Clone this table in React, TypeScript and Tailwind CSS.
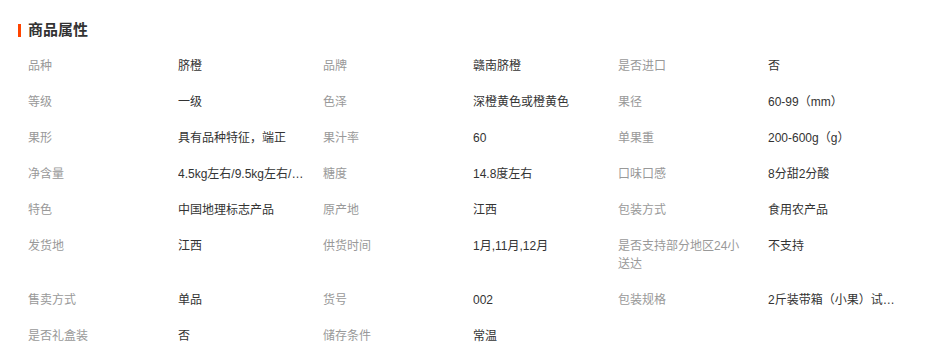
// Product attributes panel (商品属性)
type Attr = { label: string; value: string };

const rows: Attr[][] = [
  [
    { label: '品种', value: '脐橙' },
    { label: '品牌', value: '赣南脐橙' },
    { label: '是否进口', value: '否' },
  ],
  [
    { label: '等级', value: '一级' },
    { label: '色泽', value: '深橙黄色或橙黄色' },
    { label: '果径', value: '60-99（mm）' },
  ],
  [
    { label: '果形', value: '具有品种特征，端正' },
    { label: '果汁率', value: '60' },
    { label: '单果重', value: '200-600g（g）' },
  ],
  [
    { label: '净含量', value: '4.5kg左右/9.5kg左右/2.5kg左右' },
    { label: '糖度', value: '14.8度左右' },
    { label: '口味口感', value: '8分甜2分酸' },
  ],
  [
    { label: '特色', value: '中国地理标志产品' },
    { label: '原产地', value: '江西' },
    { label: '包装方式', value: '食用农产品' },
  ],
  [
    { label: '发货地', value: '江西' },
    { label: '供货时间', value: '1月,11月,12月' },
    { label: '是否支持部分地区24小送达', value: '不支持' },
  ],
  [
    { label: '售卖方式', value: '单品' },
    { label: '货号', value: '002' },
    { label: '包装规格', value: '2斤装带箱（小果）试吃装' },
  ],
  [
    { label: '是否礼盒装', value: '否' },
    { label: '储存条件', value: '常温' },
  ],
];

function AttrCell({ label, value }: Attr) {
  return (
    <div className="flex w-[295px]">
      {/* label column wraps, value column truncates with ellipsis */}
      <div className="w-[150px] pr-[25px] text-[#999]">{label}</div>
      <div className="w-[132px] truncate text-[#333]">{value}</div>
    </div>
  );
}

export default function App() {
  return (
    <div
      className="min-h-[362px] bg-white pt-[20px] pl-[18px] text-[12px] leading-[18px]"
      style={{ fontFamily: '"Liberation Sans", "Noto Sans CJK SC", sans-serif' }}
    >
      {/* ── Section heading ─────────────────────────────────────── */}
      <div className="flex h-[20px] items-center gap-[7px]">
        <span className="h-[13px] w-[3px] bg-[#ff4400]" />
        <h2 className="text-[15px] font-bold leading-[20px] text-[#333]">商品属性</h2>
      </div>

      {/* ── Attribute table ─────────────────────────────────────── */}
      <div className="mt-[8px] pl-[10px]">
        {rows.map((row, i) => (
          <div key={i} className="flex py-[9px]">
            {row.map((a) => (
              <AttrCell key={a.label} {...a} />
            ))}
          </div>
        ))}
      </div>
    </div>
  );
}
